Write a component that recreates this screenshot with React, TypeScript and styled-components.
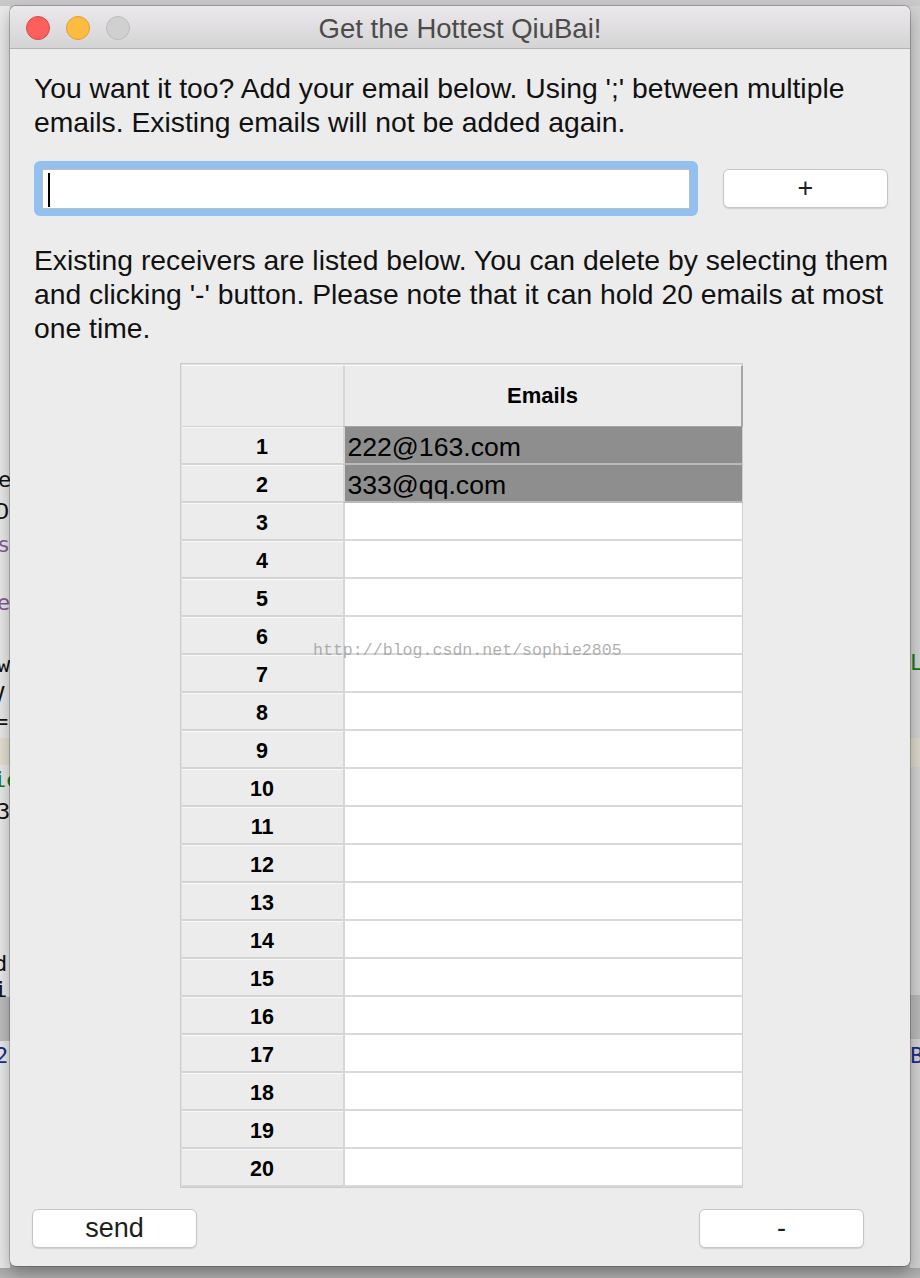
import React from "react";
import styled, { createGlobalStyle } from "styled-components";

const Global = createGlobalStyle`
  html, body { margin: 0; padding: 0; background: #cfcfcf; }
  body { font-family: "Liberation Sans", Arial, sans-serif; }
  * { box-sizing: border-box; }
`;

const Desktop = styled.div`
  width: 920px;
  height: 1278px;
  display: flex;
  flex-direction: row;
  background: linear-gradient(to bottom, #c9c9c9 0px, #c9c9c9 1262px, #a9a9a9 1268px, #b4b4b4 1278px);
  overflow: hidden;
  position: relative;
`;

const Strip = styled.div<{ $bg: string }>`
  width: 10px;
  height: 1262px;
  margin-top: 6px;
  background: ${(p) => p.$bg};
  display: flex;
  flex-direction: column;
  overflow: hidden;
  flex-shrink: 0;
`;

const Frag = styled.div<{ $h: number; $mt: number; $color: string; $bg: string; $indent: number }>`
  height: ${(p) => p.$h}px;
  margin-top: ${(p) => p.$mt}px;
  flex-shrink: 0;
  background: ${(p) => p.$bg};
  color: ${(p) => p.$color};
  font-family: "DejaVu Sans Mono", monospace;
  font-size: 22px;
  line-height: ${(p) => p.$h}px;
  white-space: nowrap;
  text-indent: ${(p) => p.$indent}px;
`;

type FragData = { y: number; h: number; text: string; color?: string; bg?: string; indent?: number };

const leftFrags: FragData[] = [
  { y: 480, h: 28, text: "er", indent: -2 },
  { y: 512, h: 28, text: "Dl", indent: -4 },
  { y: 545, h: 28, text: "se", color: "#8a5a96", indent: -3 },
  { y: 603, h: 28, text: "e", color: "#8a5a96", indent: -3 },
  { y: 665, h: 28, text: "wx", indent: -3 },
  { y: 695, h: 26, text: " V", indent: -8 },
  { y: 722, h: 26, text: "=", indent: -5 },
  { y: 751, h: 27, text: "", bg: "#e4e0d2" },
  { y: 780, h: 28, text: "ie", color: "#127a12", indent: -7 },
  { y: 812, h: 28, text: "3", indent: -3 },
  { y: 964, h: 26, text: "d", indent: -6 },
  { y: 990, h: 14, text: "i", indent: -6 },
  { y: 1019, h: 44, text: "", bg: "#bdbdbd" },
  { y: 1056, h: 28, text: "2", color: "#1c2a8c", indent: -5 },
];

const rightFrags: FragData[] = [
  { y: 663, h: 28, text: "Li", color: "#127a12", indent: 0 },
  { y: 752, h: 29, text: "", bg: "#dcd8cb" },
  { y: 1017, h: 44, text: "", bg: "#b9b9b9" },
  { y: 1056, h: 28, text: "B", color: "#1c2a8c", indent: 0 },
];

function StripContent({ frags, bg }: { frags: FragData[]; bg: string }) {
  let bottom = 6;
  return (
    <Strip $bg={bg}>
      {frags.map((f, i) => {
        const top = f.y - f.h / 2;
        const mt = top - bottom;
        bottom = top + f.h;
        return (
          <Frag
            key={i}
            $h={f.h}
            $mt={mt}
            $color={f.color ?? "#111"}
            $bg={f.bg ?? "transparent"}
            $indent={f.indent ?? 0}
          >
            {f.text}
          </Frag>
        );
      })}
    </Strip>
  );
}

const Window = styled.div`
  position: relative;
  z-index: 1;
  width: 900px;
  height: 1260px;
  margin-top: 6px;
  flex-shrink: 0;
  border-radius: 6px;
  overflow: hidden;
  background: #ececec;
  box-shadow: 0 0 0 1px rgba(0, 0, 0, 0.22), 0 8px 18px rgba(0, 0, 0, 0.3);
  display: flex;
  flex-direction: column;
`;

const TitleBar = styled.div`
  height: 43px;
  flex-shrink: 0;
  background: linear-gradient(to bottom, #ebe9eb, #d5d4d5);
  border-bottom: 1px solid #b2b2b2;
  display: flex;
  align-items: center;
  position: relative;
`;

const Lights = styled.div`
  display: flex;
  gap: 16px;
  padding-left: 16px;
  padding-top: 1px;
`;

const Light = styled.span<{ $fill: string; $stroke: string }>`
  width: 24px;
  height: 24px;
  border-radius: 50%;
  background: ${(p) => p.$fill};
  border: 1px solid ${(p) => p.$stroke};
`;

const Title = styled.div`
  position: absolute;
  left: 0;
  right: 0;
  top: 0;
  bottom: 0;
  display: flex;
  align-items: center;
  justify-content: center;
  padding-top: 3px;
  font-size: 27.5px;
  color: #4b4b4b;
  pointer-events: none;
`;

const Body = styled.div`
  flex: 1;
  position: relative;
  padding: 22px 22px 18px 24px;
  display: flex;
  flex-direction: column;
`;

const Para = styled.p<{ $mt: number }>`
  margin: ${(p) => p.$mt}px -16px 0 0;
  font-size: 28.3px;
  line-height: 34px;
  color: #111;
`;

const InputRow = styled.div`
  margin-top: 22px;
  display: flex;
  align-items: center;
  gap: 25px;
`;

const FocusRing = styled.div`
  width: 664px;
  height: 55px;
  border-radius: 6px;
  background: #93c1ef;
  padding: 8px 8px 7px 8px;
`;

const Field = styled.div`
  height: 100%;
  background: #fff;
  border: 1px solid #bdbdbd;
  padding: 3px 5px;
`;

const Caret = styled.span`
  display: block;
  width: 2px;
  height: 34px;
  background: #000;
`;

const Button = styled.div<{ $w: number }>`
  width: ${(p) => p.$w}px;
  height: 39px;
  background: #fff;
  border: 1px solid #c6c6c6;
  border-radius: 6px;
  box-shadow: 0 1px 1px rgba(0, 0, 0, 0.12);
  display: flex;
  align-items: center;
  justify-content: center;
  font-size: 27px;
  color: #1e1e1e;
`;

const Table = styled.div`
  margin-top: 18px;
  align-self: center;
  width: 563px;
  border: 1px solid #cbcbcb;
  background: #e2e2e2;
  padding: 1px 0 0 1px;
  display: grid;
  grid-template-columns: 161px 400px;
`;

const Corner = styled.div`
  height: 62px;
  background: #ececec;
  border-top: 1px solid #fafafa;
  border-bottom: 1px solid #d2d2d2;
`;

const HeadCell = styled.div`
  height: 62px;
  background: #ececec;
  border-top: 1px solid #fafafa;
  border-left: 2px solid #d6d6d6;
  border-right: 2px solid #a6a6a6;
  border-bottom: 1px solid #a6a6a6;
  display: flex;
  align-items: center;
  justify-content: center;
  font-weight: bold;
  font-size: 22px;
  color: #000;
`;

const RowHead = styled.div`
  height: 38px;
  background: #ececec;
  border-top: 1px solid #f8f8f8;
  border-bottom: 2px solid #d4d4d4;
  display: flex;
  align-items: center;
  justify-content: center;
  padding-top: 4px;
  font-weight: bold;
  font-size: 21.5px;
  color: #000;
`;

const DataCell = styled.div<{ $selected: boolean }>`
  height: 38px;
  background: ${(p) => (p.$selected ? "#8e8e8e" : "#ffffff")};
  border-left: 2px solid #d6d6d6;
  border-right: 1px solid #cfcfcf;
  border-bottom: 2px solid ${(p) => (p.$selected ? "#bababa" : "#d9d9d9")};
  display: flex;
  align-items: center;
  padding-left: 3px;
  padding-top: 5px;
  font-size: 26.6px;
  color: #000;
`;

const BottomRow = styled.div`
  margin-top: 21px;
  margin-left: -2px;
  margin-right: 24px;
  display: flex;
  justify-content: space-between;
`;

const Watermark = styled.div`
  position: absolute;
  left: 303px;
  top: 592px;
  font-family: "Liberation Mono", "Courier New", monospace;
  font-size: 16.6px;
  color: rgba(150, 150, 150, 0.75);
  white-space: nowrap;
  pointer-events: none;
`;

const emails: Record<number, string> = { 1: "222@163.com", 2: "333@qq.com" };

export default function App() {
  const rows = Array.from({ length: 20 }, (_, i) => i + 1);
  return (
    <>
      <Global />
      <Desktop>
        <StripContent frags={leftFrags} bg="#e9e9e9" />
        <Window>
          <TitleBar>
            <Lights>
              <Light $fill="#fc605c" $stroke="#df4744" />
              <Light $fill="#fdbc40" $stroke="#dea034" />
              <Light $fill="#d0d0d0" $stroke="#bdbdbd" />
            </Lights>
            <Title>Get the Hottest QiuBai!</Title>
          </TitleBar>
          <Body>
            <Para $mt={0}>
              You want it too? Add your email below. Using ';' between multiple emails. Existing emails will not be
              added again.
            </Para>
            <InputRow>
              <FocusRing>
                <Field>
                  <Caret />
                </Field>
              </FocusRing>
              <Button $w={165}>+</Button>
            </InputRow>
            <Para $mt={27}>
              Existing receivers are listed below. You can delete by selecting them and clicking '-' button. Please
              note that it can hold 20 emails at most one time.
            </Para>
            <Table>
              <Corner />
              <HeadCell>Emails</HeadCell>
              {rows.map((n) => (
                <React.Fragment key={n}>
                  <RowHead>{n}</RowHead>
                  <DataCell $selected={!!emails[n]}>{emails[n] ?? ""}</DataCell>
                </React.Fragment>
              ))}
            </Table>
            <BottomRow>
              <Button $w={165}>send</Button>
              <Button $w={165}>-</Button>
            </BottomRow>
            <Watermark>http://blog.csdn.net/sophie2805</Watermark>
          </Body>
        </Window>
        <StripContent frags={rightFrags} bg="#d2d2d2" />
      </Desktop>
    </>
  );
}
